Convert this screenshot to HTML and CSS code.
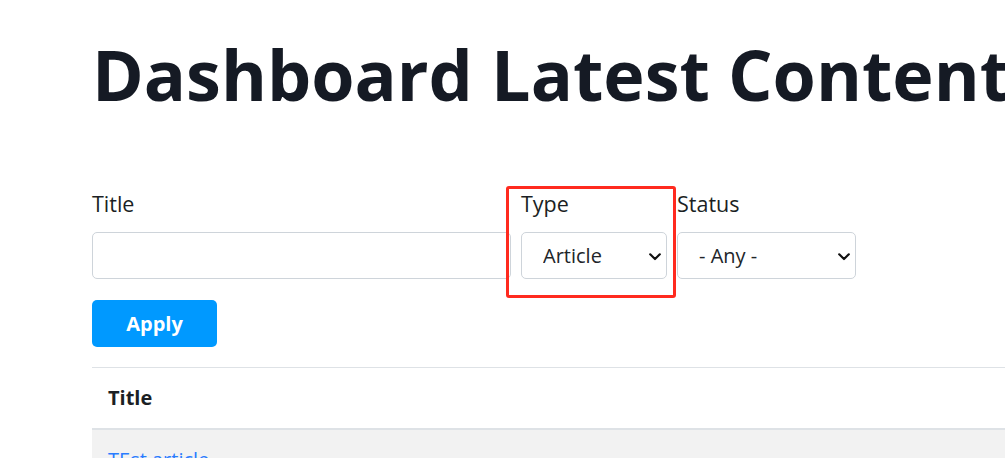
FILE: index.html
```html
<!DOCTYPE html>
<html lang="en">
<head>
<meta charset="utf-8">
<title>Dashboard Latest Content</title>
<link rel="stylesheet" href="styles.css">
</head>
<body>
<main class="page">
  <h1 class="page-title">Dashboard Latest Content</h1>
  <form class="filters">
    <div class="filter-row">
      <div class="field field-title">
        <label class="field-label" for="f-title">Title</label>
        <input class="text-input" id="f-title" type="text">
      </div>
      <div class="field field-type highlighted">
        <label class="field-label" for="f-type">Type</label>
        <div class="select-wrap">
          <select class="select" id="f-type"><option>Article</option></select>
          <svg class="chevron" width="12" height="8" viewBox="0 0 12 8"><path d="M1.2 1.3 L6 6 L10.8 1.3" fill="none" stroke="#111" stroke-width="2.2" stroke-linecap="round" stroke-linejoin="round"/></svg>
        </div>
      </div>
      <div class="field field-status">
        <label class="field-label" for="f-status">Status</label>
        <div class="select-wrap">
          <select class="select select-status" id="f-status"><option>- Any -</option></select>
          <svg class="chevron" width="12" height="8" viewBox="0 0 12 8"><path d="M1.2 1.3 L6 6 L10.8 1.3" fill="none" stroke="#111" stroke-width="2.2" stroke-linecap="round" stroke-linejoin="round"/></svg>
        </div>
      </div>
    </div>
    <button class="btn-apply" type="button">Apply</button>
  </form>
  <table class="content-table">
    <thead>
      <tr><th>Title</th></tr>
    </thead>
    <tbody>
      <tr><td><a href="#" class="item-link">TEst article</a></td></tr>
    </tbody>
  </table>
</main>
</body>
</html>
```

FILE: styles.css
```css
*, *::before, *::after { box-sizing: border-box; }
html, body { margin: 0; padding: 0; }
body {
  font-family: "Open Sans", "Noto Sans", sans-serif;
  color: #212529;
  background: #fff;
  overflow: hidden;
}
.page {
  padding-left: 92px;
}
.page-title {
  margin: 33px 0 0;
  font-size: 70px;
  line-height: 82px;
  font-weight: 700;
  color: #151a24;
  white-space: nowrap;
}
.filters {
  margin-top: 72px;
}
.filter-row {
  display: flex;
  gap: 10px;
  align-items: flex-start;
}
.field {
  display: flex;
  flex-direction: column;
}
.field-label {
  font-size: 21.5px;
  line-height: 33px;
  margin-bottom: 12px;
  color: #1b1f24;
}
.text-input {
  width: 419px;
  height: 47px;
  border: 1px solid #ced4da;
  border-radius: 5px;
  font: inherit;
  font-size: 20px;
  padding: 0 15px;
  background: #fff;
}
.highlighted { position: relative; }
.highlighted::after {
  content: "";
  position: absolute;
  left: -15px;
  top: -1px;
  width: 170px;
  height: 112px;
  border: 3px solid #ff2a1f;
  border-radius: 3px;
  pointer-events: none;
}
.select-wrap { position: relative; }
.select {
  appearance: none;
  -webkit-appearance: none;
  width: 146px;
  height: 47px;
  border: 1px solid #ced4da;
  border-radius: 5px;
  background: #fff;
  font-family: inherit;
  font-size: 20px;
  color: #212529;
  padding: 0 30px 0 21px;
  margin: 0;
}
.select-status { width: 179px; }
.chevron {
  position: absolute;
  right: 6px;
  top: 21px;
  pointer-events: none;
}
.btn-apply {
  display: block;
  margin-top: 21px;
  width: 125px;
  height: 47px;
  border: none;
  border-radius: 5px;
  background: #0099ff;
  color: #fff;
  font-family: inherit;
  font-size: 20px;
  font-weight: 700;
  padding: 0;
}
.content-table {
  margin-top: 20px;
  width: 1000px;
  border-collapse: collapse;
}
.content-table th {
  text-align: left;
  font-size: 20px;
  font-weight: 700;
  line-height: 30px;
  padding: 15px 16px;
  border-top: 1px solid #dee2e6;
  border-bottom: 2px solid #dee2e6;
  color: #1b1f24;
}
.content-table td {
  font-size: 20px;
  line-height: 30px;
  padding: 15px 16px;
  background: #f2f2f2;
}
.item-link {
  color: #2a7cff;
  text-decoration: none;
}
```
